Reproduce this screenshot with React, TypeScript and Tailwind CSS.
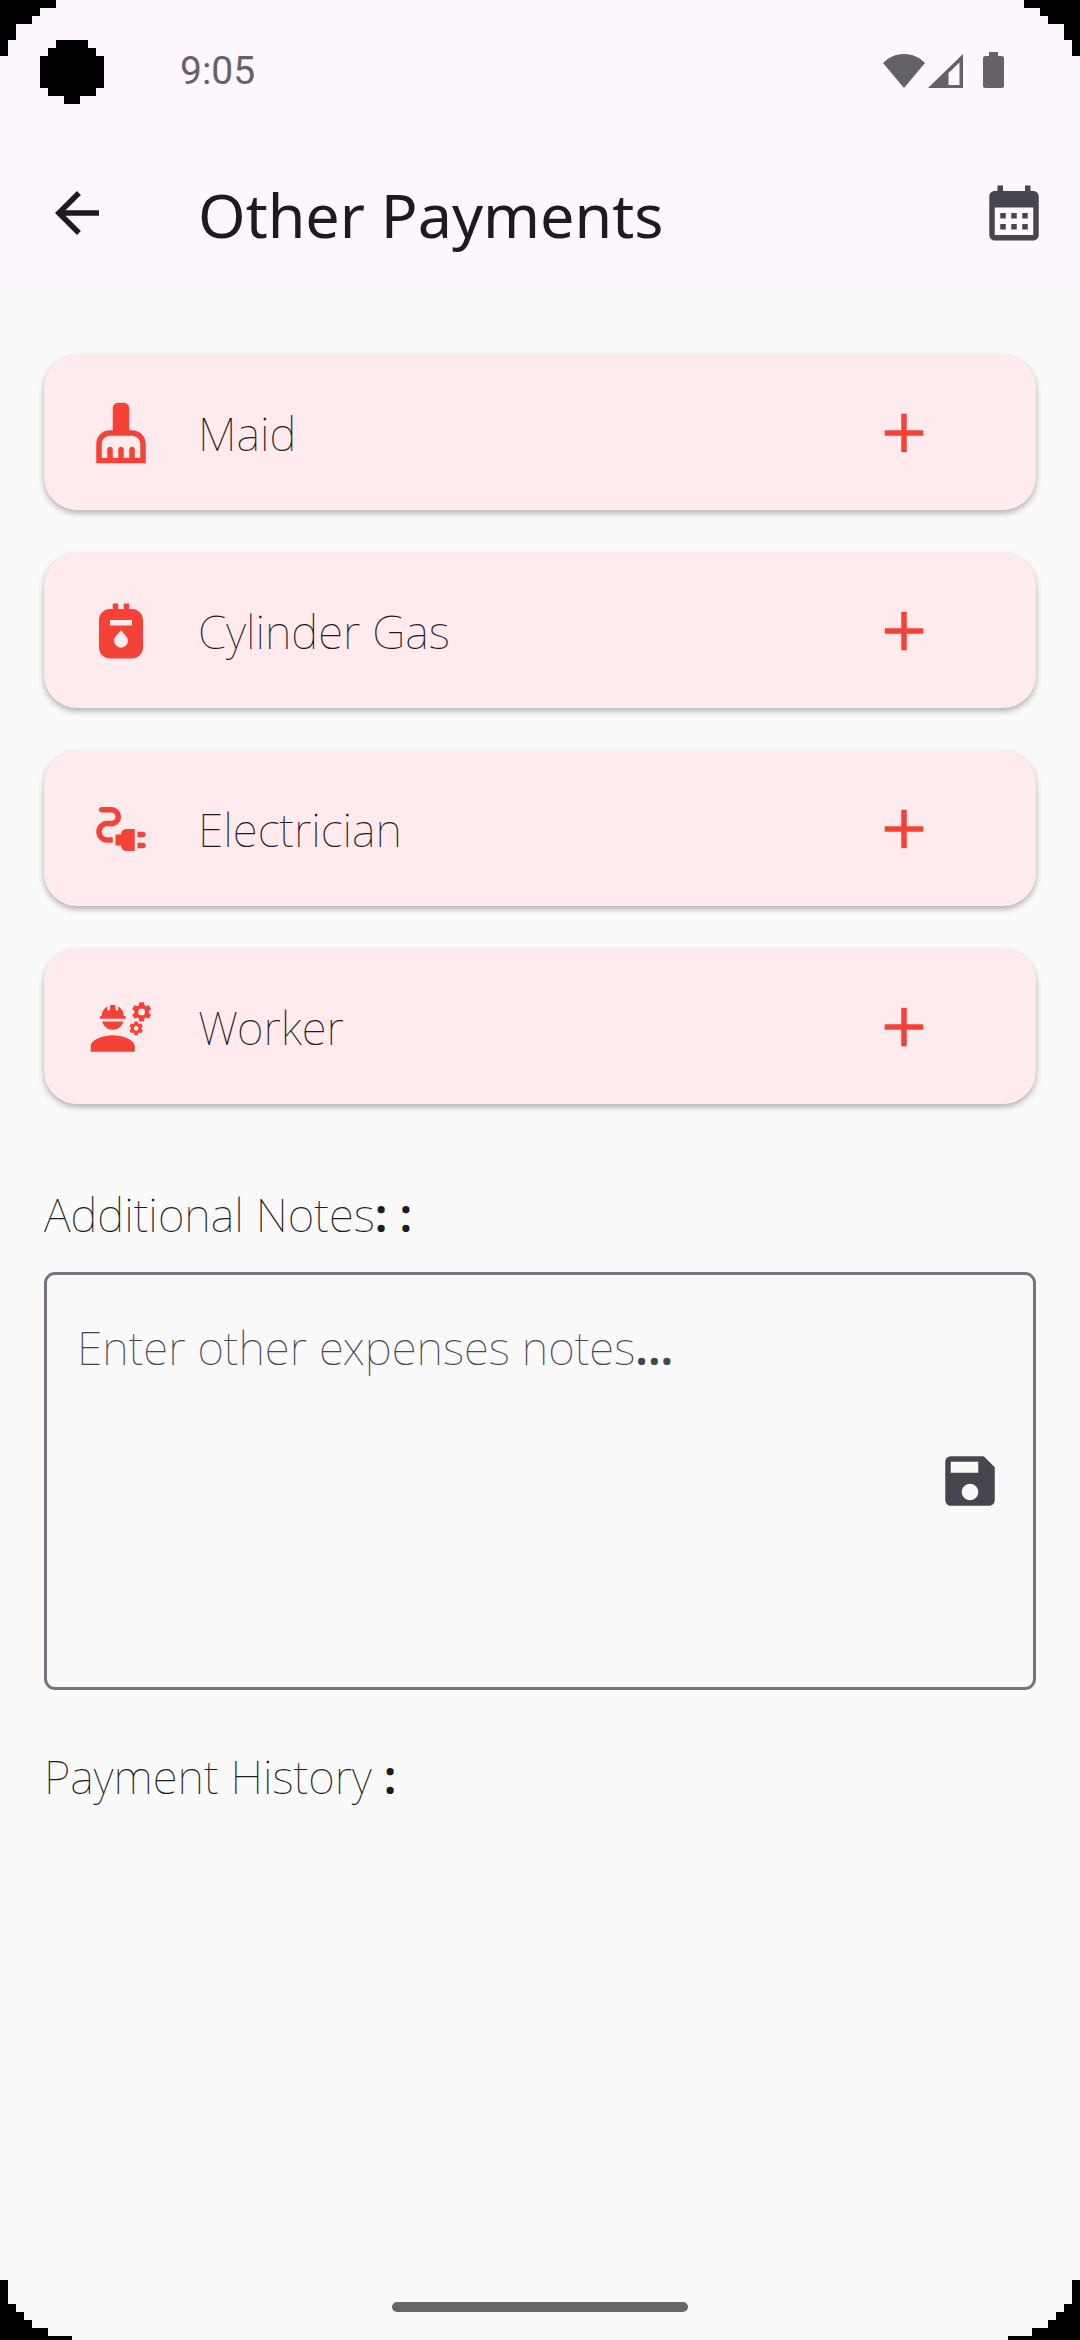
import { useState } from "react";
import type { IconType } from "react-icons";
import {
  MdAdd,
  MdArrowBack,
  MdCalendarMonth,
  MdCleaningServices,
  MdElectricalServices,
  MdEngineering,
  MdGasMeter,
  MdSave,
} from "react-icons/md";

const payments: { name: string; Icon: IconType }[] = [
  { name: "Maid", Icon: MdCleaningServices },
  { name: "Cylinder Gas", Icon: MdGasMeter },
  { name: "Electrician", Icon: MdElectricalServices },
  { name: "Worker", Icon: MdEngineering },
];

function TopCorner({ className }: { className: string }) {
  return (
    <svg className={className} width="56" height="56" viewBox="0 0 56 56" aria-hidden="true">
      <path d="M0 0H56V8H40V16H32V24H16V40H8V56H0Z" />
    </svg>
  );
}

function BottomCorner({ className }: { className: string }) {
  return (
    <svg className={className} width="72" height="60" viewBox="0 0 72 60" aria-hidden="true">
      <path d="M0 0H8V24H16V32H24V40H32V48H48V56H72V60H0Z" />
    </svg>
  );
}

function StatusBar() {
  return (
    <div className="flex h-[136px] items-start justify-between pt-10 pr-[76px] pl-10 text-[#646266]">
      <div className="flex items-start">
        <svg width="64" height="64" viewBox="0 0 64 64" fill="#000" aria-hidden="true">
          <path d="M16 0H48V8H56V16H64V48H56V56H40V64H24V56H8V48H0V16H8V8H16Z" />
        </svg>
        <span className="ml-[76px] pt-2 font-[Roboto,sans-serif] text-[39px] leading-[46px]">9:05</span>
      </div>
      <div className="flex items-end pt-3">
        <svg width="42" height="35" viewBox="0 0 42 35" fill="currentColor" aria-hidden="true">
          <path d="M21 35L0 10C6 4 13 1 21 1s15 3 21 9Z" />
        </svg>
        <svg className="ml-[3px]" width="35" height="35" viewBox="0 0 35 35" fill="currentColor" aria-hidden="true">
          <path fillRule="evenodd" d="M35 1V35H0ZM31.500 9.500L20.500 20V32H31.500Z" />
        </svg>
        <svg className="ml-[20px]" width="21" height="36" viewBox="0 0 21 36" fill="currentColor" aria-hidden="true">
          <path d="M6 0H15V4H18.500A2.500 2.500 0 0 1 21 6.500V33.500A2.500 2.500 0 0 1 18.500 36H2.500A2.500 2.500 0 0 1 0 33.500V6.500A2.500 2.500 0 0 1 2.500 4H6Z" />
        </svg>
      </div>
    </div>
  );
}

export default function App() {
  const [notes, setNotes] = useState("");
  return (
    <div className="relative flex min-h-screen flex-col bg-[#fafafa] font-['Noto_Sans',sans-serif] text-[#1d1b20]">
      <TopCorner className="absolute top-0 left-0" />
      <TopCorner className="absolute top-0 right-0 -scale-x-100" />
      <BottomCorner className="absolute bottom-0 left-0" />
      <BottomCorner className="absolute right-0 bottom-0 -scale-x-100" />

      <header className="bg-[#fef7ff]">
        <StatusBar />
        <div className="flex h-[154px] items-center">
          <button type="button" aria-label="Back" className="flex h-[132px] w-[154px] items-center justify-center">
            <MdArrowBack size={66} />
          </button>
          <h1 className="ml-11 flex-1 pt-1 text-[61px] leading-[80px]">Other Payments</h1>
          <button type="button" aria-label="Calendar" className="flex size-[132px] items-center justify-center text-[#49454f]">
            <MdCalendarMonth size={66} />
          </button>
        </div>
      </header>

      <main className="flex flex-1 flex-col px-11 pt-[65px]">
        <ul className="flex flex-col gap-[43px]">
          {payments.map(({ name, Icon }) => (
            <li
              key={name}
              className="flex h-[155px] items-center rounded-[33px] bg-[#ffebee] pr-[66px] pl-11 shadow-[0_3px_6px_rgba(0,0,0,0.3)]"
            >
              <Icon size={66} className="shrink-0 text-[#f44336]" aria-hidden="true" />
              <span className="ml-11 flex-1 text-[46px] leading-[60px] font-thin">{name}</span>
              <button type="button" aria-label={`Add ${name}`} className="flex size-[132px] items-center justify-center text-[#f44336]">
                <MdAdd size={66} />
              </button>
            </li>
          ))}
        </ul>

        <label htmlFor="notes" className="mt-20 text-[46px] leading-[60px] font-thin">
          Additional Notes<span className="font-semibold">: :</span>
        </label>
        <div className="relative mt-7 flex h-[418px] items-center rounded-[11px] border-3 border-[#79747e] pr-[30px]">
          <textarea
            id="notes"
            value={notes}
            onChange={(event) => setNotes(event.target.value)}
            className="h-full flex-1 resize-none bg-transparent px-[30px] pt-[42px] text-[46px] leading-[60px] font-thin outline-none"
          />
          {notes === "" && (
            <span className="pointer-events-none absolute top-[42px] left-[30px] text-[46px] leading-[60px] font-thin text-[#49454f]">
              Enter other expenses notes<span className="font-semibold">...</span>
            </span>
          )}
          <button type="button" aria-label="Save notes" className="flex size-[66px] items-center justify-center text-[#49454f]">
            <MdSave size={66} />
          </button>
        </div>

        <h2 className="mt-14 text-[46px] leading-[60px] font-thin">
          Payment History <span className="font-semibold">:</span>
        </h2>
      </main>

      <div className="mx-auto mb-7 h-[10px] w-[296px] rounded-full bg-[#666666]" />
    </div>
  );
}
